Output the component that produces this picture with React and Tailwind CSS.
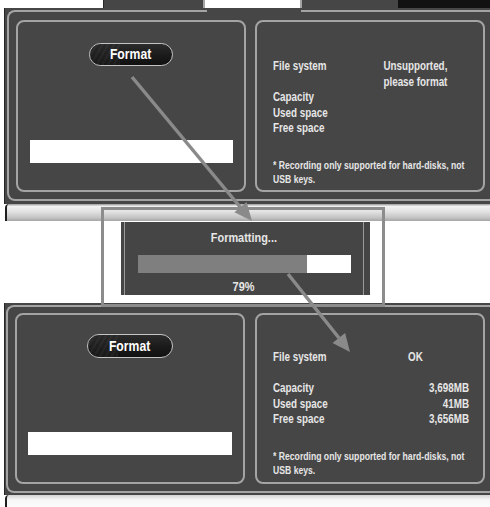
const FONT = "font-['Liberation_Sans','Arial',sans-serif]";

function FormatButton({ size }) {
  return (
    <div
      className={`${size} relative flex items-center justify-center rounded-full border border-[#c4c4c4] overflow-hidden bg-[linear-gradient(180deg,#2c2c2c_0%,#1a1a1a_55%,#111_100%)]`}
    >
      <div className="absolute inset-y-0 left-0 w-[30px] bg-[repeating-linear-gradient(120deg,#3a3a3a_0px,#3a3a3a_2px,#262626_2px,#262626_5px)] opacity-40" />
      <span className={`relative inline-block scale-x-[0.84] ${FONT} font-bold text-[14.5px] leading-none text-white`}>Format</span>
    </div>
  );
}

function LeftPanel({ variant }) {
  const top = variant === "top";
  return (
    <div className="w-[230px] h-full rounded-[8px] border-2 border-[#a4a4a4] bg-[#464646] flex flex-col">
      <div className={top ? "mt-[21px] flex justify-center" : "mt-[19px] flex justify-center"}>
        <FormatButton size={top ? "w-[84px] h-[23px]" : "w-[86px] h-[24px]"} />
      </div>
      <div className={top ? "mt-[74px] ml-[12px] w-[203px] h-[23px] bg-white" : "mt-[74px] ml-[11px] w-[204px] h-[23px] bg-white"} />
    </div>
  );
}

function InfoPanel({ variant }) {
  const top = variant === "top";
  return (
    <div
      className={`w-[230px] h-full rounded-[8px] border-2 border-[#a4a4a4] bg-[#464646] pl-[16px] ${top ? "pt-[37px]" : "pt-[35px]"} ${FONT} font-bold text-[#e6e6e6]`}
    >
      <div className="w-[252px] origin-top-left scale-x-[0.80]">
        <div className="grid grid-cols-[111px_134px] text-[12.3px] leading-[15.5px]">
          <div className="h-[31px]">File system</div>
          <div className="h-[31px] text-center">
            {top ? (
              <>
                Unsupported,
                <br />
                please format
              </>
            ) : (
              "OK"
            )}
          </div>
          <div>Capacity</div>
          <div className="text-right">{top ? "" : "3,698MB"}</div>
          <div>Used space</div>
          <div className="text-right">{top ? "" : "41MB"}</div>
          <div>Free space</div>
          <div className="text-right">{top ? "" : "3,656MB"}</div>
        </div>
        <p className="mt-[21px] w-[250px] text-[10.8px] leading-[14px]">
          * Recording only supported for hard-disks, not USB keys.
        </p>
      </div>
    </div>
  );
}

export default function App() {
  return (
    <div className="relative w-[490px] h-[507px] overflow-hidden bg-white">
      {/* top strip with tab remnants */}
      <div className="flex h-[8px]">
        <div className="w-[103px] bg-white" />
        <div className="w-[102px] bg-[#464646] border-l border-[#2a2a2a] border-r-2 border-r-[#a4a4a4]" />
        <div className="w-[95px] bg-white" />
        <div className="w-[98px] bg-[#464646] border-l-2 border-[#a4a4a4]" />
        <div className="flex-1 bg-[#111]" />
      </div>

      {/* top screenshot frame */}
      <div className="relative ml-[4px] h-[196px] bg-[#464646] border-l border-[#262626] pl-[2px] pt-[2px] pb-[3px]">
        <div className="h-full rounded-tl-[8px] rounded-bl-[8px] border-l-2 border-t-2 border-b-2 border-[#a4a4a4] pl-[7px] pt-[8px] pb-[7px] flex gap-[9px]">
          <LeftPanel variant="top" />
          <InfoPanel variant="top" />
        </div>
        <div className="absolute left-[202px] top-[1px] w-[94px] h-[4px] bg-[#464646]" />
      </div>

      {/* gradient bar */}
      <div className="ml-[5px] h-[17px] rounded-tl-[4px] border-l-2 border-[#1e1e1e] bg-[linear-gradient(180deg,#9a9a9a_0%,#f2f2f2_14%,#e2e2e2_45%,#c4c4c4_80%,#a6a6a6_100%)]" />

      {/* middle: formatting dialog */}
      <div className="h-[82px] pt-[1px] pl-[121px]">
        <div className="w-[249px] h-[73px] bg-[#454545] flex">
          <div className={`ml-[3px] mr-[6px] flex-1 border-l border-r border-[#9a9a9a] flex flex-col items-center ${FONT} font-bold text-[#e6e6e6]`}>
            <div className="mt-[8px] text-[13.5px] leading-[16px] inline-block scale-x-[0.81]">Formatting...</div>
            <div className="mt-[9px] w-[213px] h-[23px] bg-white flex">
              <div className="w-[169px] h-full bg-[#7f7f7f]" />
            </div>
            <div className="mt-[6px] text-[13.5px] leading-[16px] inline-block scale-x-[0.81]">79%</div>
          </div>
        </div>
      </div>

      {/* bottom screenshot frame */}
      <div className="ml-[4px] h-[192px] bg-[#464646] border-l border-[#262626] pl-[1px] pt-[2px] pb-[2px]">
        <div className="h-full rounded-tl-[8px] rounded-bl-[8px] border-l-2 border-t-2 border-b-2 border-[#a4a4a4] pl-[7px] pt-[6px] pb-[7px] flex gap-[10px]">
          <LeftPanel variant="bottom" />
          <InfoPanel variant="bottom" />
        </div>
      </div>
      <div className="ml-[5px] h-[12px] rounded-tl-[4px] border-l-2 border-[#1e1e1e] bg-[linear-gradient(180deg,#d4d4d4_0%,#f6f6f6_40%,#fbfbfb_100%)]" />

      {/* highlight frame around dialog */}
      <div className="absolute left-[101px] top-[207px] w-[284px] h-[100px] border-[3px] border-[#8c8c8c]" />

      {/* arrows */}
      <svg className="absolute inset-0 pointer-events-none" width="490" height="507" viewBox="0 0 490 507">
        <line x1="132" y1="77" x2="241" y2="208" stroke="#8a8a8a" strokeWidth="3.5" />
        <polygon points="252,221 234.4,212.3 246.6,202.1" fill="#8a8a8a" />
        <line x1="288" y1="274" x2="339" y2="338" stroke="#8a8a8a" strokeWidth="3.5" />
        <polygon points="350,352 332.5,342.9 345.1,332.9" fill="#8a8a8a" />
      </svg>
    </div>
  );
}
